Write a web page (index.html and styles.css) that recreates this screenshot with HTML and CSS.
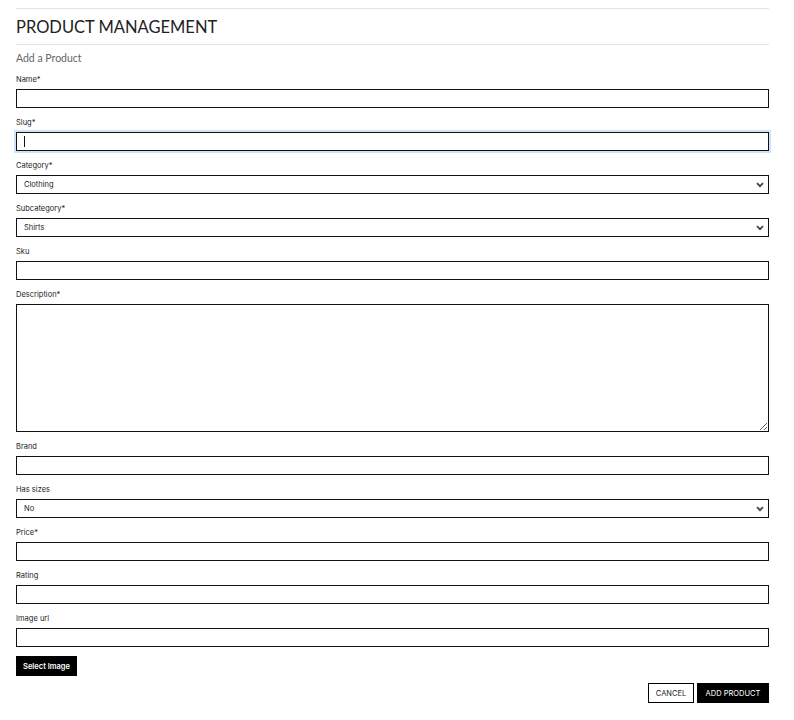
FILE: index.html
```html
<!DOCTYPE html>
<html lang="en">
<head>
<meta charset="utf-8">
<title>Product Management</title>
<link rel="stylesheet" href="styles.css">
</head>
<body>
<div class="page">
  <hr class="rule">
  <h1 class="title">PRODUCT MANAGEMENT</h1>
  <hr class="rule">
  <p class="subtitle">Add a Product</p>
  <form class="form">
    <div class="field">
      <label class="label">Name*</label>
      <input class="control" type="text">
    </div>
    <div class="field">
      <label class="label">Slug*</label>
      <div class="input-wrap">
        <input class="control focused" type="text">
        <span class="caret"></span>
      </div>
    </div>
    <div class="field">
      <label class="label">Category*</label>
      <div class="select-wrap">
        <select class="control select"><option>Clothing</option></select>
        <svg class="chevron" width="8" height="6" viewBox="0 0 8 6"><path d="M1 1.2 L4 4.2 L7 1.2" fill="none" stroke="#444" stroke-width="1.8"/></svg>
      </div>
    </div>
    <div class="field">
      <label class="label">Subcategory*</label>
      <div class="select-wrap">
        <select class="control select"><option>Shirts</option></select>
        <svg class="chevron" width="8" height="6" viewBox="0 0 8 6"><path d="M1 1.2 L4 4.2 L7 1.2" fill="none" stroke="#444" stroke-width="1.8"/></svg>
      </div>
    </div>
    <div class="field">
      <label class="label">Sku</label>
      <input class="control" type="text">
    </div>
    <div class="field">
      <label class="label">Description*</label>
      <textarea class="control textarea"></textarea>
    </div>
    <div class="field">
      <label class="label">Brand</label>
      <input class="control" type="text">
    </div>
    <div class="field">
      <label class="label">Has sizes</label>
      <div class="select-wrap">
        <select class="control select"><option>No</option></select>
        <svg class="chevron" width="8" height="6" viewBox="0 0 8 6"><path d="M1 1.2 L4 4.2 L7 1.2" fill="none" stroke="#444" stroke-width="1.8"/></svg>
      </div>
    </div>
    <div class="field">
      <label class="label">Price*</label>
      <input class="control" type="text">
    </div>
    <div class="field">
      <label class="label">Rating</label>
      <input class="control" type="text">
    </div>
    <div class="field">
      <label class="label">Image url</label>
      <input class="control" type="text">
    </div>
    <button type="button" class="btn btn-dark btn-select">Select Image</button>
    <div class="actions">
      <button type="button" class="btn btn-light">CANCEL</button>
      <button type="button" class="btn btn-dark">ADD PRODUCT</button>
    </div>
  </form>
</div>
</body>
</html>
```
FILE: styles.css
```css
* { box-sizing: border-box; }
html, body { margin: 0; padding: 0; background: #fff; }
body { font-family: "Inter", "Liberation Sans", sans-serif; color: #222; }

.page {
  padding: 8px 25px 0 16px;
}

.rule {
  margin: 0;
  border: 0;
  height: 1px;
  background: #e2e2e2;
}

.title {
  margin: 0;
  padding-top: 2px;
  font-family: "Lato", "Liberation Sans", sans-serif;
  font-weight: 400;
  font-size: 16.5px;
  line-height: 33px;
  color: #222;
}

.subtitle {
  margin: 7px 0 0;
  font-family: "Lato", "Liberation Sans", sans-serif;
  font-size: 10.5px;
  line-height: 13px;
  color: #666;
}

.form {
  margin-top: 9px;
  display: flex;
  flex-direction: column;
}

.field {
  display: flex;
  flex-direction: column;
  margin-bottom: 9px;
}

.label {
  font-size: 7.5px;
  line-height: 12px;
  margin-bottom: 3px;
  color: #222;
}

.control {
  display: block;
  width: 100%;
  height: 19px;
  margin: 0;
  border: 1.5px solid #111;
  border-radius: 0;
  background: #fff;
  font-family: "Inter", "Liberation Sans", sans-serif;
  font-size: 7.5px;
  color: #222;
  padding: 0 8px;
  outline: none;
}

.input-wrap {
  position: relative;
}

.focused {
  box-shadow: 0 0 0 2px #cfe2fb;
}

.caret {
  position: absolute;
  left: 8px;
  top: 4px;
  width: 1px;
  height: 11px;
  background: #111;
}

.select-wrap {
  position: relative;
}

.select {
  -webkit-appearance: none;
  appearance: none;
  padding-left: 7px;
}

.chevron {
  position: absolute;
  right: 5px;
  top: 7px;
  pointer-events: none;
}

.textarea {
  height: 128px;
  resize: vertical;
  padding: 4px 8px;
}

.btn {
  font-family: "Inter", "Liberation Sans", sans-serif;
  font-size: 7.5px;
  height: 20px;
  padding: 0;
  border-radius: 0;
  cursor: pointer;
}

.btn-dark {
  background: #000;
  color: #fff;
  border: 1px solid #000;
}

.btn-light {
  background: #fff;
  color: #222;
  border: 1px solid #000;
}

.btn-select {
  align-self: flex-start;
  font-weight: 600;
  width: 61px;
}

.actions {
  display: flex;
  justify-content: flex-end;
  gap: 3px;
  margin-top: 7px;
}

.actions .btn-light { width: 46px; }
.actions .btn-dark { width: 72px; }
```
